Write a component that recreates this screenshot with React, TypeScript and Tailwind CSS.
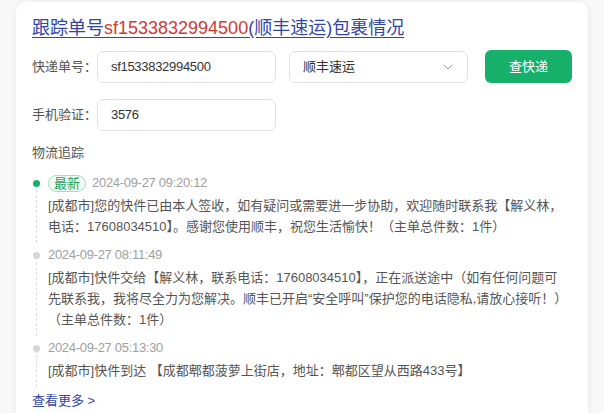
import React from "react";
import { ChevronDown } from "lucide-react";

const FONT = { fontFamily: '"Liberation Sans", "Noto Sans CJK SC", sans-serif' };

type Item = { time: string; latest?: boolean; lines: string[] };

const items: Item[] = [
  {
    time: "2024-09-27 09:20:12",
    latest: true,
    lines: [
      "[成都市]您的快件已由本人签收，如有疑问或需要进一步协助，欢迎随时联系我【解义林，",
      "电话：17608034510】。感谢您使用顺丰，祝您生活愉快！（主单总件数：1件）",
    ],
  },
  {
    time: "2024-09-27 08:11:49",
    lines: [
      "[成都市]快件交给【解义林，联系电话：17608034510】，正在派送途中（如有任何问题可",
      "先联系我，我将尽全力为您解决。顺丰已开启“安全呼叫”保护您的电话隐私,请放心接听！）",
      "（主单总件数：1件）",
    ],
  },
  {
    time: "2024-09-27 05:13:30",
    lines: ["[成都市]快件到达 【成都郫都菠萝上街店，地址：郫都区望从西路433号】"],
  },
];

export default function App() {
  return (
    <div className="min-h-[413px] w-[604px] overflow-hidden bg-[#f8f8f8] pt-[2px]" style={FONT}>
      <div className="mx-[16px] h-[430px] rounded-[10px] bg-white px-[16px] pt-[14px] shadow-[0_0_10px_rgba(0,0,0,0.06)]">
        <a className="block text-[18px] leading-[24px] text-[#3346a6] underline underline-offset-[3px]">
          跟踪单号<span className="text-[#d33a2f]">sf1533832994500</span>(顺丰速运)包裹情况
        </a>

        <div className="mt-[10px] flex items-center">
          <div className="w-[65px] text-[13px] text-[#555]">快递单号：</div>
          <div className="flex h-[32px] w-[179px] items-center rounded-[6px] border border-[#e2e2e2] pl-[13px] text-[13px] tracking-[-0.3px] text-[#333]">
            sf1533832994500
          </div>
          <div className="ml-[13px] flex h-[32px] w-[179px] items-center justify-between rounded-[6px] border border-[#e2e2e2] pl-[13px] pr-[11px] text-[13px] text-[#333]">
            <span>顺丰速运</span>
            <ChevronDown size={16} strokeWidth={1.5} className="text-[#9a9a9a]" />
          </div>
          <button className="ml-[17px] flex h-[33px] w-[87px] items-center justify-center rounded-[6px] bg-[#16b06a] text-[13px] text-white">
            查快递
          </button>
        </div>

        <div className="mt-[16px] flex items-center">
          <div className="w-[65px] text-[13px] text-[#555]">手机验证：</div>
          <div className="flex h-[32px] w-[179px] items-center rounded-[6px] border border-[#e2e2e2] pl-[13px] text-[13px] tracking-[-0.3px] text-[#333]">
            3576
          </div>
        </div>

        <div className="mt-[12px] text-[13px] leading-[20px] text-[#555]">物流追踪</div>

        <div className="mt-[8px] flex flex-col">
          {items.map((it, i) => (
            <div key={i} className="relative pb-[6px] pl-[16px]">
              <div className="absolute bottom-0 left-[3.5px] top-[14px] border-l border-dashed border-[#dcdcdc]" />
              <div
                className={
                  "absolute left-[0.5px] top-[8.5px] h-[7px] w-[7px] rounded-full " +
                  (it.latest ? "bg-[#16b06a]" : "bg-[#d6d6d6]")
                }
              />
              <div className="flex h-[24px] items-center">
                {it.latest && (
                  <span className="mr-[6px] flex h-[17px] items-center rounded-full border border-[#a8dcc0] bg-[#f1faf5] px-[5px] text-[13px] leading-none text-[#1aa35f]">
                    最新
                  </span>
                )}
                <span className="text-[13px] tracking-[-0.3px] text-[#a0a0a0]">{it.time}</span>
              </div>
              <div className="text-[13px] leading-[21px] text-[#555]">
                {it.lines.map((l, j) => (
                  <div key={j} className="whitespace-nowrap">
                    {l}
                  </div>
                ))}
              </div>
            </div>
          ))}
        </div>

        <a className="mt-[4px] block text-[13px] leading-[20px] text-[#3346a6]">查看更多 &gt;</a>
      </div>
    </div>
  );
}
